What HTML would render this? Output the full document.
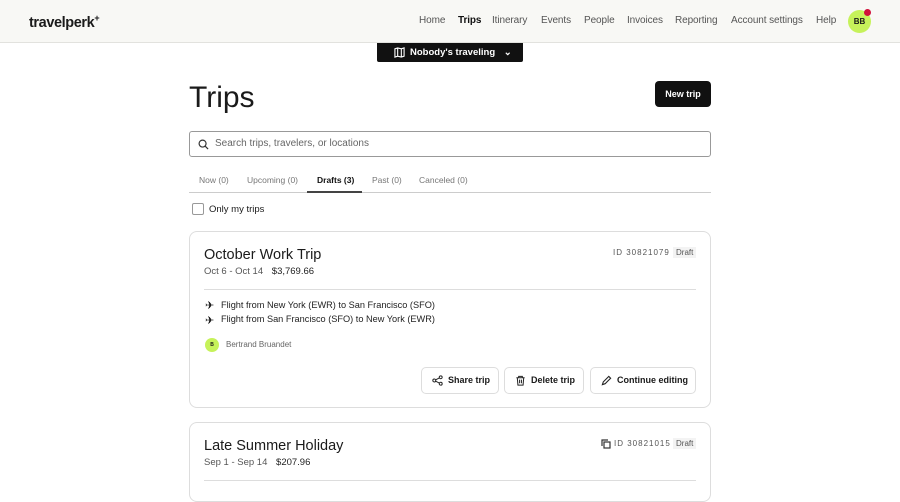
<!DOCTYPE html>
<html><head><style>
*{box-sizing:border-box;margin:0;padding:0}
body{width:900px;height:484px;overflow:hidden;background:#fff;font-family:"Liberation Sans",sans-serif;color:#1a1a1a;position:relative}
.hdr{position:absolute;left:0;top:0;width:900px;height:43px;background:#f8f8f5;border-bottom:1px solid #e2e2de}
.logo{position:absolute;left:29px;top:13px;font-size:14.5px;font-weight:600;letter-spacing:-0.4px}
.nav{position:absolute;top:15px;font-size:10px;color:#555;letter-spacing:-0.1px}
.av{position:absolute;left:848px;top:10px;width:23px;height:23px;border-radius:50%;background:#c6f25a;font-size:8px;font-weight:bold;text-align:center;line-height:23px}
.dot{position:absolute;left:864px;top:9px;width:7px;height:7px;border-radius:50%;background:#d0103a}
.nobody{position:absolute;left:377px;top:43px;width:146px;height:19px;background:#111;color:#fff;font-size:9.5px;font-weight:bold;line-height:19px;padding-left:33px;border-radius:0 0 2px 2px}
h1{position:absolute;left:189px;top:81px;font-size:30px;font-weight:normal}
.newtrip{position:absolute;left:655px;top:81px;width:56px;height:26px;background:#111;color:#fff;border-radius:4px;font-size:9px;font-weight:bold;text-align:center;line-height:26px}
.search{position:absolute;left:189px;top:131px;width:522px;height:26px;border:1px solid #999;border-radius:3px;font-size:10px;color:#666;line-height:24px;padding-left:25px}
.tabs{position:absolute;left:189px;top:192px;width:522px;border-top:1px solid #ccc}
.tab{position:absolute;top:175px;font-size:8.5px;color:#777}
.card{position:absolute;left:189px;width:522px;border:1px solid #ddd;border-radius:8px}
.t{position:absolute;left:14px;font-size:14.5px}
.d{position:absolute;left:14px;font-size:9.5px;color:#555}
.pr{color:#222;margin-left:6px}
.id{position:absolute;font-size:8px;color:#555;letter-spacing:1px}
.dr{position:absolute;font-size:8px;color:#555;background:#f3f3f3;padding:1px 3px}
.fl{position:absolute;left:31px;font-size:9.2px;color:#222}
.btn{position:absolute;top:135px;height:27px;border:1px solid #ddd;border-radius:5px;font-size:9px;font-weight:bold;line-height:25px;padding-left:26px}
</style></head><body>
<div class="hdr">
<div class="logo">travelperk<sup style="font-size:9px">+</sup></div>
<span class="nav" style="left:419px">Home</span>
<span class="nav" style="left:458px;color:#111;font-weight:bold">Trips</span>
<span class="nav" style="left:492px">Itinerary</span>
<span class="nav" style="left:541px">Events</span>
<span class="nav" style="left:584px">People</span>
<span class="nav" style="left:627px">Invoices</span>
<span class="nav" style="left:675px">Reporting</span>
<span class="nav" style="left:731px">Account settings</span>
<span class="nav" style="left:816px">Help</span>
<div class="av">BB</div><div class="dot"></div>
</div>
<div class="nobody"><svg style="position:absolute;left:17px;top:4px" width="11" height="11" viewBox="0 0 12 12" fill="none" stroke="#fff" stroke-width="1.2"><path d="M1 2l3-1 4 1 3-1v9l-3 1-4-1-3 1z M4 1v9 M8 2v9"/></svg>Nobody's traveling <span style="margin-left:6px">⌄</span></div>
<h1>Trips</h1>
<div class="newtrip">New trip</div>
<div class="search"><svg style="position:absolute;left:8px;top:7px" width="11" height="11" viewBox="0 0 12 12" fill="none" stroke="#333" stroke-width="1.3"><circle cx="5" cy="5" r="3.8"/><path d="M8 8l3 3"/></svg>Search trips, travelers, or locations</div>
<span class="tab" style="left:199px">Now (0)</span>
<span class="tab" style="left:247px">Upcoming (0)</span>
<span class="tab" style="left:317px;color:#111;font-weight:bold">Drafts (3)</span>
<span class="tab" style="left:372px">Past (0)</span>
<span class="tab" style="left:419px">Canceled (0)</span>
<div class="tabs"></div>
<div style="position:absolute;left:307px;top:191px;width:55px;height:2px;background:#444"></div>
<div style="position:absolute;left:192px;top:203px;width:12px;height:12px;border:1px solid #999;border-radius:2px"></div>
<span style="position:absolute;left:209px;top:204px;font-size:9.5px">Only my trips</span>
<div class="card" style="top:231px;height:177px">
<div class="t" style="top:15px">October Work Trip</div>
<div class="d" style="top:34px">Oct 6 - Oct 14 <span class="pr">$3,769.66</span></div>
<span class="id" style="left:423px;top:16px">ID 30821079</span><span class="dr" style="left:483px;top:15px">Draft</span>
<div style="position:absolute;left:14px;right:14px;top:57px;border-top:1px solid #ddd"></div>
<span style="position:absolute;left:15px;top:67px;font-size:11px">✈</span><div class="fl" style="top:68px">Flight from New York (EWR) to San Francisco (SFO)</div>
<span style="position:absolute;left:15px;top:82px;font-size:11px">✈</span><div class="fl" style="top:82px">Flight from San Francisco (SFO) to New York (EWR)</div>
<div style="position:absolute;left:15px;top:106px;width:14px;height:14px;border-radius:50%;background:#c6f25a;font-size:5px;text-align:center;line-height:14px;font-weight:bold">B</div>
<span style="position:absolute;left:36px;top:108px;font-size:8px;color:#666">Bertrand Bruandet</span>
<div class="btn" style="left:231px;width:78px">Share trip<svg style="position:absolute;left:10px;top:7px" width="11" height="11" viewBox="0 0 12 12" fill="none" stroke="#222" stroke-width="1.1"><circle cx="2.5" cy="6" r="1.6"/><circle cx="9.5" cy="2.5" r="1.6"/><circle cx="9.5" cy="9.5" r="1.6"/><path d="M4 5.2l4-2M4 6.8l4 2"/></svg></div>
<div class="btn" style="left:314px;width:80px">Delete trip<svg style="position:absolute;left:10px;top:7px" width="11" height="11" viewBox="0 0 12 12" fill="none" stroke="#222" stroke-width="1.1"><path d="M1.5 3h9M4 3V1.5h4V3M2.5 3l.7 8h5.6l.7-8M5 5v4M7 5v4"/></svg></div>
<div class="btn" style="left:400px;width:106px">Continue editing<svg style="position:absolute;left:10px;top:7px" width="11" height="11" viewBox="0 0 12 12" fill="none" stroke="#222" stroke-width="1.2"><path d="M1.5 10.5l1-3 6-6 2 2-6 6z"/></svg></div>
</div>
<div class="card" style="top:422px;height:80px">
<div class="t" style="top:15px">Late Summer Holiday</div>
<div class="d" style="top:34px">Sep 1 - Sep 14 <span class="pr">$207.96</span></div>
<svg style="position:absolute;left:411px;top:16px" width="10" height="10" viewBox="0 0 10 10" fill="none" stroke="#333" stroke-width="1.2"><rect x="3" y="3" width="6" height="6"/><path d="M1 7V1h6"/></svg>
<span class="id" style="left:424px;top:16px">ID 30821015</span><span class="dr" style="left:483px;top:15px">Draft</span>
<div style="position:absolute;left:14px;right:14px;top:57px;border-top:1px solid #ddd"></div>
</div>
</body></html>
